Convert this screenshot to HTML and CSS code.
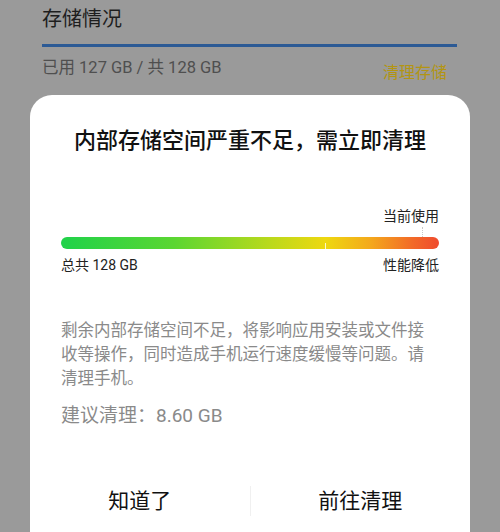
FILE: index.html
```html
<!DOCTYPE html>
<html lang="zh-CN">
<head>
    <meta charset="UTF-8">
    <meta name="viewport" content="width=device-width, initial-scale=1.0">
    <title>存储情况</title>
    <link rel="stylesheet" href="styles.css">
</head>
<body>
    <div class="page">
        <h2 class="page-title">存储情况</h2>
        <div class="usage-line"></div>
        <div class="usage-row">
            <span class="usage-text">已用 127 GB / 共 128 GB</span>
            <span class="clean-link">清理存储</span>
        </div>
    </div>

    <div class="dialog">
        <h1 class="dialog-title">内部存储空间严重不足，需立即清理</h1>
        <div class="meter">
            <div class="meter-top">当前使用</div>
            <div class="meter-mark"></div>
            <div class="meter-bar">
                <span class="meter-tick"></span>
            </div>
            <div class="meter-labels">
                <span>总共 128 GB</span>
                <span>性能降低</span>
            </div>
        </div>
        <p class="dialog-text">剩余内部存储空间不足，将影响应用安装或文件接收等操作，同时造成手机运行速度缓慢等问题。请清理手机。</p>
        <p class="suggest">建议清理：8.60 GB</p>
        <div class="dialog-buttons">
            <button class="btn">知道了</button>
            <span class="btn-divider"></span>
            <button class="btn">前往清理</button>
        </div>
    </div>
</body>
</html>
```

FILE: styles.css
```css
body {
    font-family: Roboto, "Noto Sans CJK SC", sans-serif;
    margin: 0;
    background-color: #9a9a9a;
    height: 532px;
    overflow: hidden;
}

.page {
    padding: 0 43px 0 42px;
}

.page-title {
    margin: 0;
    padding-top: 5px;
    font-size: 20px;
    font-weight: normal;
    line-height: 28px;
    color: #1e1e1e;
}

.usage-line {
    margin-top: 11px;
    height: 3px;
    background-color: #2c5a95;
}

.usage-row {
    display: flex;
    justify-content: space-between;
    margin-top: 10px;
}

.usage-text {
    font-size: 16.5px;
    line-height: 22px;
    color: #4f4f4f;
}

.clean-link {
    margin-top: 5px;
    margin-right: 10px;
    font-size: 16px;
    line-height: 22px;
    color: #b39512;
}

.dialog {
    margin: 11px 30px 0 30px;
    background-color: #fff;
    border-radius: 22px 22px 0 0;
    padding: 31px 31px 0 31px;
    height: 440px;
    box-sizing: border-box;
}

.dialog-title {
    margin: 0;
    font-size: 22px;
    font-weight: 500;
    line-height: 30px;
    color: #111;
    text-align: center;
}

.meter {
    margin-top: 50px;
}

.meter-top {
    text-align: right;
    font-size: 14px;
    line-height: 20px;
    color: #222;
}

.meter-mark {
    margin: 1px 16px 0 auto;
    width: 0;
    height: 10px;
    border-left: 1px dotted #c8c8c8;
}

.meter-bar {
    position: relative;
    height: 12px;
    border-radius: 6px;
    background: linear-gradient(to right, #1fd24a 0%, #5bd632 30%, #b9d91c 55%, #eed810 70%, #f4a81c 82%, #f26a28 93%, #ef4b2e 100%);
}

.meter-tick {
    position: absolute;
    left: 264px;
    top: 6px;
    width: 1px;
    height: 6px;
    background-color: rgba(255, 255, 255, 0.8);
}

.meter-labels {
    display: flex;
    justify-content: space-between;
    margin-top: 6px;
    font-size: 14px;
    line-height: 20px;
    color: #222;
}

.dialog-text {
    margin: 44px 0 0 0;
    font-size: 16.5px;
    line-height: 24px;
    color: #8a8a8a;
}

.suggest {
    margin: 12px 0 0 0;
    font-size: 19px;
    line-height: 26px;
    color: #8a8a8a;
}

.dialog-buttons {
    display: flex;
    align-items: center;
    margin: 57px -31px 0 -31px;
}

.btn {
    flex: 1;
    border: none;
    background: none;
    font-family: inherit;
    font-size: 21px;
    line-height: 30px;
    color: #111;
    padding: 0;
}

.btn-divider {
    width: 1px;
    height: 30px;
    background-color: #f0f0f0;
}
```
